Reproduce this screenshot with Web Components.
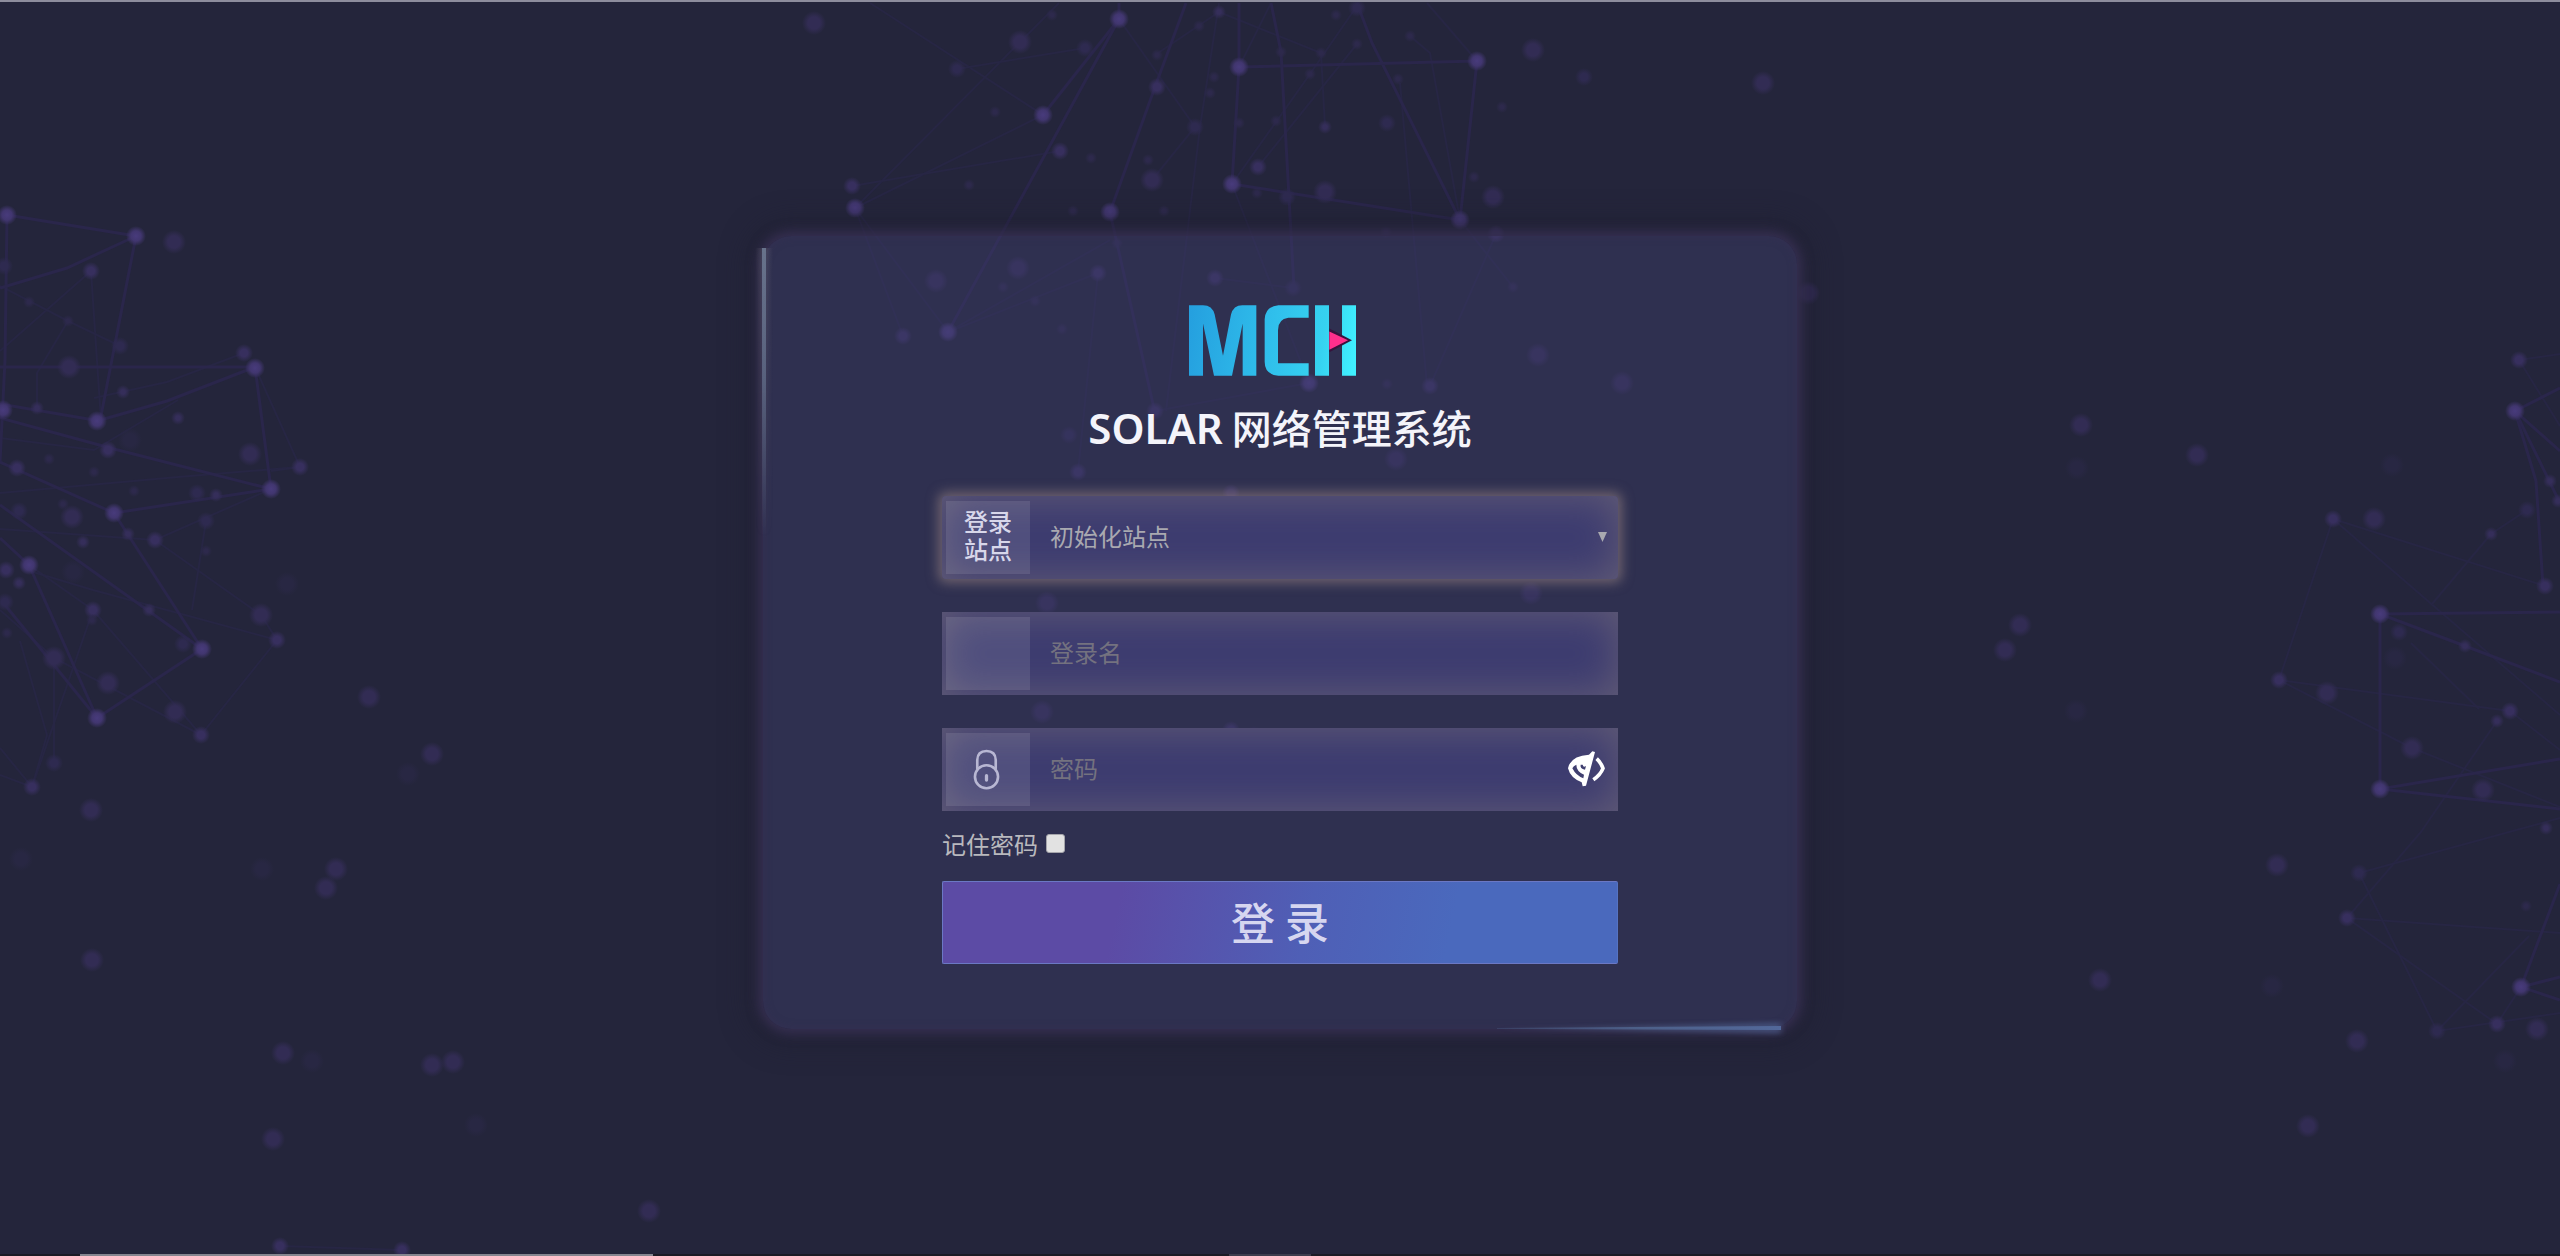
<!DOCTYPE html>
<html lang="zh-CN">
<head>
<meta charset="utf-8">
<meta name="viewport" content="width=device-width, initial-scale=1">
<title>SOLAR 网络管理系统</title>
<style>
  html, body { margin: 0; height: 100%; }
  body {
    background: #24253b;
    color: #f2f2f8;
    font-family: "Noto Sans", "Noto Sans CJK SC", sans-serif;
  }
</style>
</head>
<body>
<login-page>
  <login-card>
    <brand-title><strong>SOLAR</strong> 网络管理系统</brand-title>
    <site-field></site-field>
    <text-field type="text" hint="登录名"></text-field>
    <text-field type="password" hint="密码" reveal><lock-icon></lock-icon></text-field>
    <remember-check>记住密码</remember-check>
    <login-button>登 录</login-button>
  </login-card>
</login-page>

<script>
const define = (name, html, setup) => {
  const template = document.createElement('template');
  template.innerHTML = html;
  customElements.define(name, class extends HTMLElement {
    constructor() {
      super();
      this.attachShadow({ mode: 'open' }).append(template.content.cloneNode(true));
    }
    connectedCallback() { if (setup) setup(this, this.shadowRoot); }
  });
};

/* Styles that all input rows share */
const fieldStyle = `
  :host { display: block; }
  .row {
    display: flex; box-sizing: border-box; height: 83px; padding: 5px 4px;
    background: #3d3c70;
    box-shadow: inset 0 0 40px rgba(112, 104, 120, .75);
  }
  label {
    display: flex; align-items: center; justify-content: center;
    flex: none; width: 84px; color: #d8d7ea; text-align: center;
    font: 500 24px/28px "Liberation Sans", "Noto Sans CJK SC", sans-serif;
    background: rgba(255, 255, 255, .1);
  }
  input, select {
    flex: 1; min-width: 0; margin: 0; padding: 0 0 2px 20px; border: 0; outline: 0;
    border-radius: 0; background: none; appearance: none;
    font: 400 24px/34px "Noto Sans CJK SC", sans-serif; color: #a9a9b0;
  }
  input::placeholder { color: #74727f; opacity: 1; }
`;

/* Particle clusters: x/y is the origin, sx/sy the grid density.
   Nodes are [x, y, kind]; links are lists of connected points. */
const clusters = [
  { x: 0, y: 150, sx: 3, sy: 2.24,
    nodes: [[20,146,'a'],[407,193,'a'],[523,206,'c'],[273,270,'b'],[12,260,'d'],[87,340,'f'],[205,383,'f'],[360,439,'d'],[208,487,'c'],[732,454,'b'],[765,489,'a'],[368,542,'s'],[534,601,'s'],[8,582,'a'],[112,577,'s'],[290,606,'a'],[325,673,'b'],[750,681,'c'],[899,709,'b'],[812,760,'a'],[282,721,'f'],[147,692,'f'],[52,713,'b'],[343,812,'a'],[401,764,'f'],[590,769,'d'],[648,773,'s'],[618,830,'d'],[618,899,'f'],[216,822,'c'],[190,793,'f'],[57,809,'d'],[250,877,'s'],[384,860,'s'],[464,873,'b'],[88,929,'a'],[18,940,'b'],[57,970,'s'],[860,972,'e'],[16,1013,'d'],[20,1083,'f'],[278,1030,'b'],[275,1052,'f'],[447,1030,'s'],[550,1106,'d'],[605,1118,'a'],[784,1042,'c'],[832,1097,'b'],[163,1137,'c'],[325,1193,'c'],[291,1273,'a'],[526,1258,'c'],[604,1311,'b'],[1107,1225,'c'],[1296,1354,'c'],[1223,1397,'e'],[163,1373,'d'],[95,1428,'b'],[274,1478,'c'],[390,650,'e'],[220,945,'e']],
    strong: [[20,146,407,193,301,606,0,570],[20,146,16,470,0,700],[407,193,200,265,0,308],[0,487,765,487,500,562,290,606],[765,487,812,760,343,670,0,600],[812,760,343,812,0,700],[343,812,605,1118,291,1273,16,1020],[0,795,605,1118],[0,870,88,929,291,1273]],
    faint: [[273,270,0,450],[273,270,304,606],[0,304,205,383,360,439],[765,487,899,709,534,733,0,768],[899,709,812,720],[0,645,282,673,534,560],[812,760,464,873,0,850],[464,873,784,1042,832,1097,604,1311,278,1030],[618,830,575,1030],[832,1097,278,985,100,945],[604,1311,163,1137,0,1030],[278,1030,95,1428,0,1400],[60,1100,140,1310,95,1428,0,1340],[163,1137,163,1373],[205,383,112,500,112,577],[88,929,278,1030],[732,454,500,520,282,556]] },
  { x: 2000, y: 300, sx: 2.8, sy: 1.823,
    nodes: [[226,228,'c'],[552,282,'c'],[215,306,'e'],[57,593,'c'],[15,638,'c'],[214,750,'e'],[1097,300,'e'],[1454,110,'b'],[1441,202,'a'],[1540,330,'s'],[1562,366,'s'],[1476,383,'d'],[1374,427,'s'],[1525,521,'b'],[933,399,'b'],[1048,399,'c'],[1064,572,'a'],[1117,605,'d'],[1107,652,'e'],[1302,630,'s'],[782,693,'b'],[915,716,'c'],[1428,749,'b'],[1392,768,'s'],[1153,817,'c'],[1063,891,'a'],[1352,894,'c'],[1530,963,'s'],[775,1030,'c'],[1005,1044,'d'],[972,1127,'b'],[1473,1104,'f'],[281,1240,'c'],[761,1250,'e'],[1458,1252,'a'],[1391,1320,'b'],[1504,1329,'c'],[1223,1332,'d'],[1415,1388,'e'],[1000,1350,'c'],[862,1506,'c']],
    strong: [[1568,160,1441,202,1568,275],[1441,202,1500,330,1520,521],[1441,202,1568,370],[1568,569,1064,572,1063,891,1568,836],[1064,572,1302,630,1568,697],[1063,891,1568,928],[1568,1065,1458,1252,1568,1277],[1458,1252,1568,1235]],
    faint: [[933,399,782,693,1153,817,1568,925],[933,399,1568,757],[933,399,1525,521],[782,693,1428,749,1568,820],[1392,768,1180,970,972,1127,1391,1320],[972,1127,1568,1154],[1005,1044,1568,945],[1005,1044,1223,1332,1568,1300],[1223,1332,1480,1160],[1374,427,1210,555],[1454,110,1568,98],[1454,110,1568,230],[1374,427,1476,383],[1150,625,1340,745],[1391,1320,1458,1252]] },
  { x: 780, y: 0, sx: 1.452, sy: 3,
    nodes: [[50,68,'c'],[348,127,'c'],[257,208,'d'],[492,58,'a'],[443,145,'d'],[395,45,'f'],[638,36,'s'],[609,78,'f'],[666,202,'a'],[1012,183,'a'],[838,25,'d'],[915,108,'f'],[838,132,'f'],[728,155,'f'],[786,160,'f'],[808,46,'f'],[548,165,'f'],[548,262,'b'],[770,222,'f'],[898,238,'f'],[630,230,'f'],[624,280,'f'],[382,344,'a'],[312,337,'f'],[603,380,'d'],[792,382,'s'],[882,370,'d'],[667,370,'f'],[720,362,'f'],[1049,321,'f'],[1094,150,'c'],[1168,232,'d'],[1427,249,'c'],[406,452,'b'],[452,473,'f'],[534,480,'f'],[694,500,'b'],[657,551,'a'],[540,540,'c'],[792,575,'c'],[736,592,'d'],[693,580,'f'],[1008,530,'f'],[1035,590,'c'],[987,660,'a'],[1040,702,'b'],[880,695,'f'],[104,557,'b'],[275,556,'f'],[109,625,'a'],[479,636,'a'],[425,633,'f'],[557,634,'f'],[490,730,'f'],[462,818,'b'],[632,835,'b'],[346,805,'c'],[226,843,'c'],[324,862,'f'],[370,903,'f'],[244,995,'a'],[178,1009,'b'],[409,986,'f'],[745,865,'d'],[1065,860,'f'],[1100,1065,'c'],[944,1158,'b'],[882,1152,'f'],[1223,1148,'c'],[768,1148,'a'],[545,1232,'b'],[420,1305,'d'],[895,1378,'c'],[1493,878,'c'],[432,1415,'b'],[655,1480,'b'],[388,1810,'c'],[1090,1780,'c'],[380,2135,'c'],[655,2190,'b'],[688,2205,'d']],
    strong: [[492,58,382,344],[492,10,492,58,244,995],[590,10,545,262,479,636,545,1240],[666,202,1012,183,987,660,860,130,838,10],[666,10,666,202,657,551,987,660],[713,10,728,155,747,865]],
    faint: [[130,10,382,344,109,625,405,10],[109,625,178,1009],[109,625,244,995],[940,10,1012,183],[657,551,768,1148],[638,10,610,380,560,1232],[713,10,666,202],[104,557,406,452],[244,995,479,720],[545,1232,768,1148],[840,10,770,222,657,551],[915,108,944,160,987,660],[900,250,940,1158],[987,660,1065,860],[944,1158,1040,702],[492,58,603,380,540,540],[638,36,786,160,792,382],[838,132,694,500],[462,818,244,995],[632,835,745,865],[443,145,257,208],[432,1415,462,818],[545,165,638,36]] },
  { x: 0, y: 800, sx: 2.24, sy: 3,
    nodes: [[46,178,'e'],[587,208,'e'],[753,207,'c'],[730,264,'c'],[205,480,'c'],[633,760,'c'],[700,783,'e'],[968,796,'c'],[1015,786,'c'],[1066,974,'e'],[611,1016,'c'],[1453,1233,'c'],[627,1338,'b'],[900,1350,'b']],
    strong: [], faint: [[627,1338,900,1350]] },
];
const radius = { a: 10, b: 9, c: 12, d: 9, s: 7, f: 6, e: 12 };

define('particle-backdrop', `
  <style>
    :host { display: block; position: absolute; inset: 0; overflow: hidden; }
    svg { display: block; width: 100%; height: 100%; }
    polyline { fill: none; }
    .strong { stroke: #2a264b; stroke-width: 3; }
    .faint { stroke: #272644; stroke-width: 2; }
  </style>
  <svg viewBox="0 0 2560 1256" preserveAspectRatio="xMidYMid slice" aria-hidden="true">
    <defs>
      <radialGradient id="a"><stop offset="0" stop-color="#483b7c"/><stop offset=".5" stop-color="#41366f"/><stop offset="1" stop-color="#41366f" stop-opacity="0"/></radialGradient>
      <radialGradient id="b"><stop offset=".4" stop-color="#372f5e"/><stop offset="1" stop-color="#372f5e" stop-opacity="0"/></radialGradient>
      <radialGradient id="c"><stop offset=".5" stop-color="#322c54"/><stop offset="1" stop-color="#322c54" stop-opacity="0"/></radialGradient>
      <radialGradient id="d"><stop offset=".4" stop-color="#2e2a50"/><stop offset="1" stop-color="#2e2a50" stop-opacity="0"/></radialGradient>
      <radialGradient id="s"><stop offset=".3" stop-color="#352e5a"/><stop offset="1" stop-color="#352e5a" stop-opacity="0"/></radialGradient>
      <radialGradient id="f"><stop offset=".3" stop-color="#2d294c"/><stop offset="1" stop-color="#2d294c" stop-opacity="0"/></radialGradient>
      <radialGradient id="e"><stop offset=".5" stop-color="#282743"/><stop offset="1" stop-color="#282743" stop-opacity="0"/></radialGradient>
    </defs>
    <g></g>
  </svg>`, (host, root) => {
  const group = root.querySelector('g');
  const add = (tag, attrs) => {
    const el = document.createElementNS('http://www.w3.org/2000/svg', tag);
    for (const key in attrs) el.setAttribute(key, attrs[key]);
    group.append(el);
  };
  for (const c of clusters) {
    for (const kind of ['faint', 'strong']) {
      for (const line of c[kind]) {
        add('polyline', { class: kind, points: line.map((v, i) => Math.round(i % 2 ? c.y + v / c.sy : c.x + v / c.sx)).join(' ') });
      }
    }
    for (const [x, y, kind] of c.nodes) {
      add('circle', { cx: Math.round(c.x + x / c.sx), cy: Math.round(c.y + y / c.sy), r: radius[kind], fill: `url(#${kind})` });
    }
  }
});

define('login-page', `
  <style>
    :host { display: flex; flex-direction: column; min-height: 100vh; position: relative; overflow: hidden; }
    .edge { height: 2px; position: relative; flex: none; }
    .top { background: #8d8d9d; }
    .bottom { display: flex; background: #1b1b25; }
    .bottom i:nth-child(1) { flex: 0 0 3.125%; }
    .bottom i:nth-child(2) { flex: 0 0 22.4%; background: #85858f; }
    .bottom i:nth-child(3) { flex: 0 0 22.5%; }
    .bottom i:nth-child(4) { flex: 0 0 3.2%; background: #3c3c4c; }
    main { flex: 1; display: flex; align-items: center; justify-content: center; padding-top: 8px; position: relative; }
  </style>
  <particle-backdrop></particle-backdrop>
  <div class="edge top"></div>
  <main><slot></slot></main>
  <div class="edge bottom"><i></i><i></i><i></i><i></i></div>`);

define('login-card', `
  <style>
    :host {
      display: flex; flex-direction: column; box-sizing: border-box; position: relative;
      width: 1034px; max-width: 100%; padding: 69px 179px 65px; border-radius: 28px;
      background: rgba(64, 64, 112, .4);
      box-shadow: 0 0 12px 5px rgba(58, 49, 86, .85), 0 0 24px 18px rgba(32, 32, 50, .5), inset 0 0 8px rgba(58, 48, 84, .5);
    }
    .left, .base { position: absolute; }
    .left {
      left: -1px; top: 12px; width: 4px; height: 290px;
      background: linear-gradient(#60708f, rgba(96, 112, 143, .7) 45%, rgba(96, 112, 143, 0));
    }
    .left::before {
      content: ""; position: absolute; inset: 0 -7px;
      background: linear-gradient(90deg, transparent, rgba(120, 120, 130, .35), transparent);
      -webkit-mask-image: linear-gradient(#000, transparent); mask-image: linear-gradient(#000, transparent);
    }
    .base { right: 14px; bottom: -6px; width: 286px; height: 14px; overflow: visible; }
    ::slotted(site-field) { margin-top: 40px; }
    ::slotted(text-field) { margin-top: 33px; }
  </style>
  <slot></slot>
  <span class="left"></span>
  <svg class="base" viewBox="0 0 286 14" aria-hidden="true">
    <defs>
      <linearGradient id="beam"><stop offset="0" stop-color="#50658f" stop-opacity=".3"/><stop offset=".5" stop-color="#50658f" stop-opacity=".85"/><stop offset="1" stop-color="#52689a"/></linearGradient>
      <filter id="soft" x="-5%" y="-100%" width="110%" height="300%"><feGaussianBlur stdDeviation="3 2"/></filter>
    </defs>
    <path d="M0 8L284 1V13Z" fill="url(#beam)" opacity=".5" filter="url(#soft)"/>
    <path d="M0 7L284 5V9L0 8Z" fill="url(#beam)"/>
  </svg>`);

define('brand-title', `
  <style>
    :host { display: flex; flex-direction: column; align-items: center; }
    svg { display: block; width: 167px; height: 71px; margin-right: 15px; }
    h1 {
      margin: 23px 0 0; white-space: nowrap; color: #f4f4fa;
      font: 500 40px/56px "Noto Sans CJK SC", sans-serif;
    }
    ::slotted(strong) { font: 600 42px/56px "Noto Sans", sans-serif; }
  </style>
  <svg viewBox="0 0 501 212" role="img" aria-label="MCH">
    <defs><linearGradient id="ink" gradientUnits="userSpaceOnUse" x1="0" y1="60" x2="501" y2="130">
      <stop offset="0" stop-color="#25a0df"/><stop offset=".5" stop-color="#30c0ec"/><stop offset=".8" stop-color="#36d2f0"/><stop offset="1" stop-color="#40f0ff"/>
    </linearGradient></defs>
    <g fill="url(#ink)">
      <path d="M0 0H42Q70 0 77 28L102 152L126 28Q133 0 160 0H202V212H161V55L129 212H75L42 55V212H0Z"/>
      <path d="M359 0V38H298Q267 42 267 75V174H359V212H268Q227 208 227 170V42Q229 4 268 0Z"/>
      <path d="M378 0H420V212H378Z"/>
      <path d="M459 0H501V212H459Z"/>
    </g>
    <path d="M421 70L489 105L421 141Z" fill="#38133d"/>
    <path d="M421 79L477 105L421 134Z" fill="#ff2f8c"/>
  </svg>
  <h1><slot></slot></h1>`);

define('site-field', `
  <style>${fieldStyle}
    .row { border-radius: 4px; box-shadow: inset 0 0 40px rgba(112, 104, 120, .75), 0 0 12px 4px rgba(150, 130, 130, .6); }
    .arrow { align-self: center; flex: none; width: 9px; height: 10px; margin-right: 7px; fill: #a9a9b0; }
  </style>
  <div class="row">
    <label for="site">登录<br>站点</label>
    <select id="site"><option>初始化站点</option></select>
    <svg class="arrow" viewBox="0 0 10 10" preserveAspectRatio="none" aria-hidden="true"><path d="M0 0H10L5 10Z"/></svg>
  </div>`);

define('lock-icon', `
  <style>
    :host { display: block; margin-right: 3px; }
    svg { display: block; width: 29px; height: 43px; }
  </style>
  <svg viewBox="95 68 88 130" fill="none" stroke="#b8b7d3" stroke-width="8" stroke-linecap="round" aria-hidden="true">
    <path d="M111 130V104Q112 77 139 77Q166 77 167 104V130"/>
    <circle cx="139" cy="155" r="35"/>
    <path d="M139 152V165" stroke-width="10"/>
  </svg>`);

define('text-field', `
  <style>${fieldStyle}
    button { display: none; align-self: center; margin: 0 8px 0 0; padding: 0; border: 0; background: none; cursor: pointer; }
    :host([reveal]) button { display: block; }
    button svg { display: block; width: 39px; height: 36px; }
  </style>
  <div class="row">
    <label for="control"><slot></slot></label>
    <input id="control">
    <button type="button"><svg viewBox="50 31 117 108" aria-hidden="true">
      <path d="M53 83Q60 46 116 42L126 32L134 34L107 135L97 137L94 125Q60 112 53 83Z" fill="#fff"/>
      <path d="M66 83Q69 76 78 72Q78 92 101 102L99 113Q77 105 66 83Z" fill="#403f70"/>
      <path d="M84 72Q84 90 102 94" fill="none" stroke="#fff" stroke-width="5"/>
      <path d="M91 72Q88 84 104 87L107 76Q99 82 97 72Z" fill="#403f70"/>
      <path d="M139 54Q152 66 158 83Q150 103 129 117" fill="none" stroke="#fff" stroke-width="11"/>
    </svg></button>
  </div>`, (host, root) => {
  const input = root.querySelector('input');
  input.type = host.getAttribute('type');
  input.placeholder = host.getAttribute('hint');
  input.setAttribute('aria-label', input.placeholder);
  root.querySelector('button').onclick = () => { input.type = input.type === 'password' ? 'text' : 'password'; };
});

define('remember-check', `
  <style>
    :host { display: flex; align-items: center; height: 66px; padding-bottom: 4px; }
    label { font: 400 24px/34px "Noto Sans CJK SC", sans-serif; color: #b9b9be; }
    input { appearance: none; width: 19px; height: 19px; margin: 0 0 0 8px; border: 1px solid #a5a5ab; border-radius: 3px; background: #e2e2e2; }
    input:checked { background: #4a69bd; }
  </style>
  <label for="keep"><slot></slot></label><input id="keep" type="checkbox">`);

define('login-button', `
  <style>
    :host { display: block; }
    button {
      display: block; box-sizing: border-box; width: 100%; height: 83px; padding: 0 0 2px;
      border: 1px solid #6b78c4; border-right-color: #5573c2; border-radius: 2px; cursor: pointer;
      background: linear-gradient(102deg, #5c4ba5 26%, #4f5fb6 54%, #4a69bd 75%);
      font: 500 44px/60px "Noto Sans CJK SC", sans-serif; color: #d6d6f0;
    }
  </style>
  <button type="button"><slot></slot></button>`);
</script>
</body>
</html>
